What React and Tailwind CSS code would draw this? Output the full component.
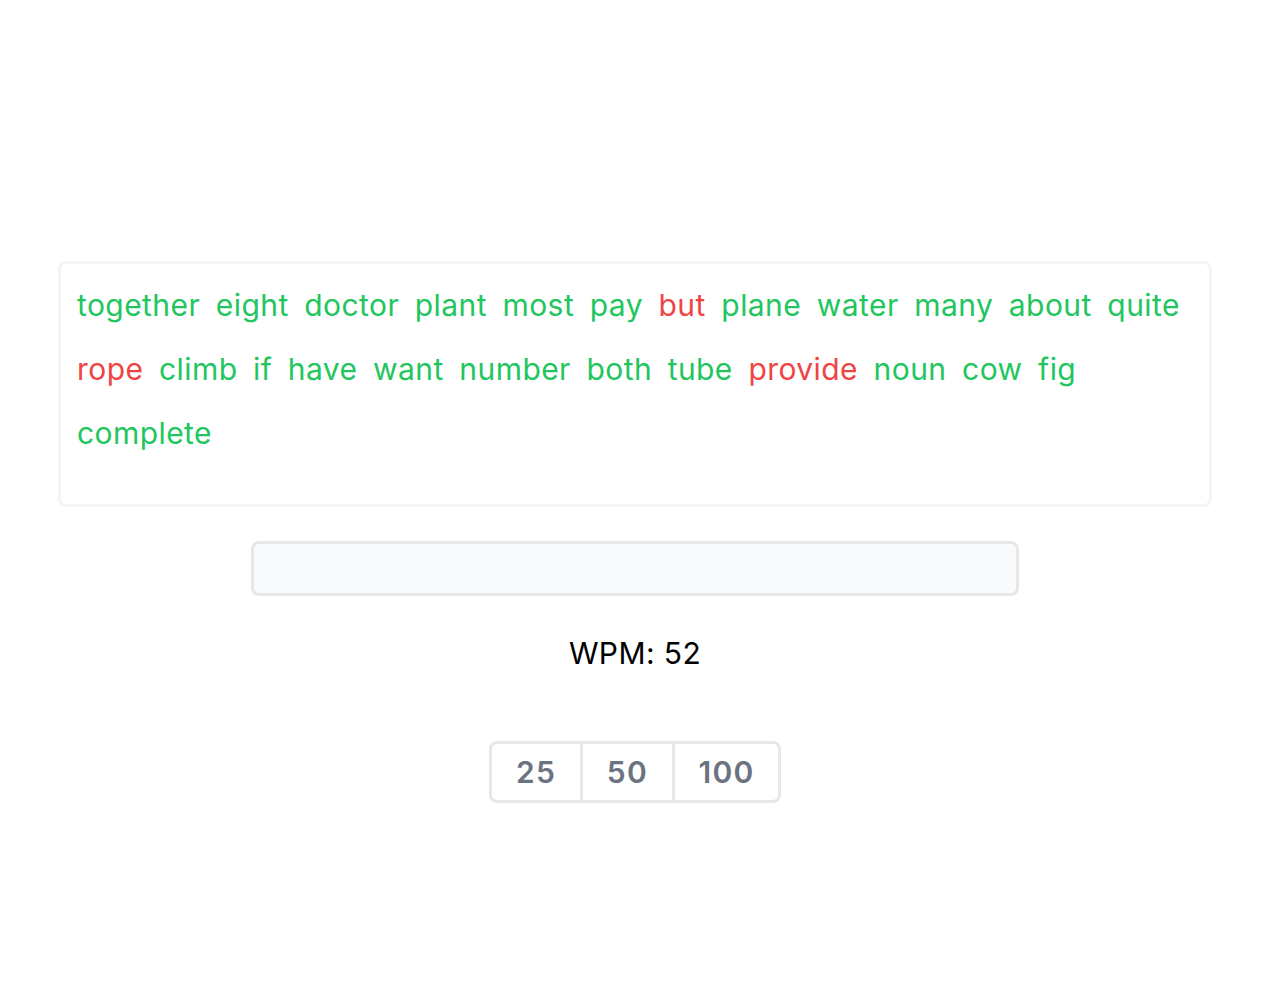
import React from "react";

const words = [
  ["together", 1], ["eight", 1], ["doctor", 1], ["plant", 1], ["most", 1], ["pay", 1], ["but", 0], ["plane", 1], ["water", 1], ["many", 1], ["about", 1], ["quite", 1],
  ["rope", 0], ["climb", 1], ["if", 1], ["have", 1], ["want", 1], ["number", 1], ["both", 1], ["tube", 1], ["provide", 0], ["noun", 1], ["cow", 1], ["fig", 1],
  ["complete", 1],
];

export default function App() {
  return (
    <div className="w-[1270px] min-h-[996px] bg-white pt-[261px] flex flex-col items-center" style={{ fontFamily: "Inter, 'Noto Sans', sans-serif" }}>
      <div className="w-[1154px] h-[246px] border-[3px] border-[#f3f4f6] rounded-lg px-4 pt-[9px]">
        <div className="flex flex-wrap gap-x-[15.6px] text-[30px] leading-[64px] tracking-[0.43px]">
          {words.map(([w, ok], i) => (
            <span key={i} className={ok ? "text-[#22c55e]" : "text-[#ef4444]"}>{w}</span>
          ))}
        </div>
      </div>
      <div className="mt-[34px] w-[768px] h-[55px] border-[3px] border-[#e5e7eb] bg-[#f9fafb] rounded-lg"></div>
      <div className="mt-[39px] text-[30px] leading-[36px] tracking-[0.4px] text-black">WPM: 52</div>
      <div className="mt-[70px] flex border-[3px] border-[#e5e7eb] rounded-lg">
        <button className="w-[88px] h-[56px] text-[30px] font-semibold tracking-[1.3px] text-[#6b7280]">25</button>
        <button className="w-[92px] h-[56px] text-[30px] font-semibold tracking-[1.3px] text-[#6b7280] border-l-[3px] border-[#e5e7eb]">50</button>
        <button className="w-[106px] h-[56px] text-[30px] font-semibold tracking-[1.3px] text-[#6b7280] border-l-[3px] border-[#e5e7eb]">100</button>
      </div>
    </div>
  );
}
